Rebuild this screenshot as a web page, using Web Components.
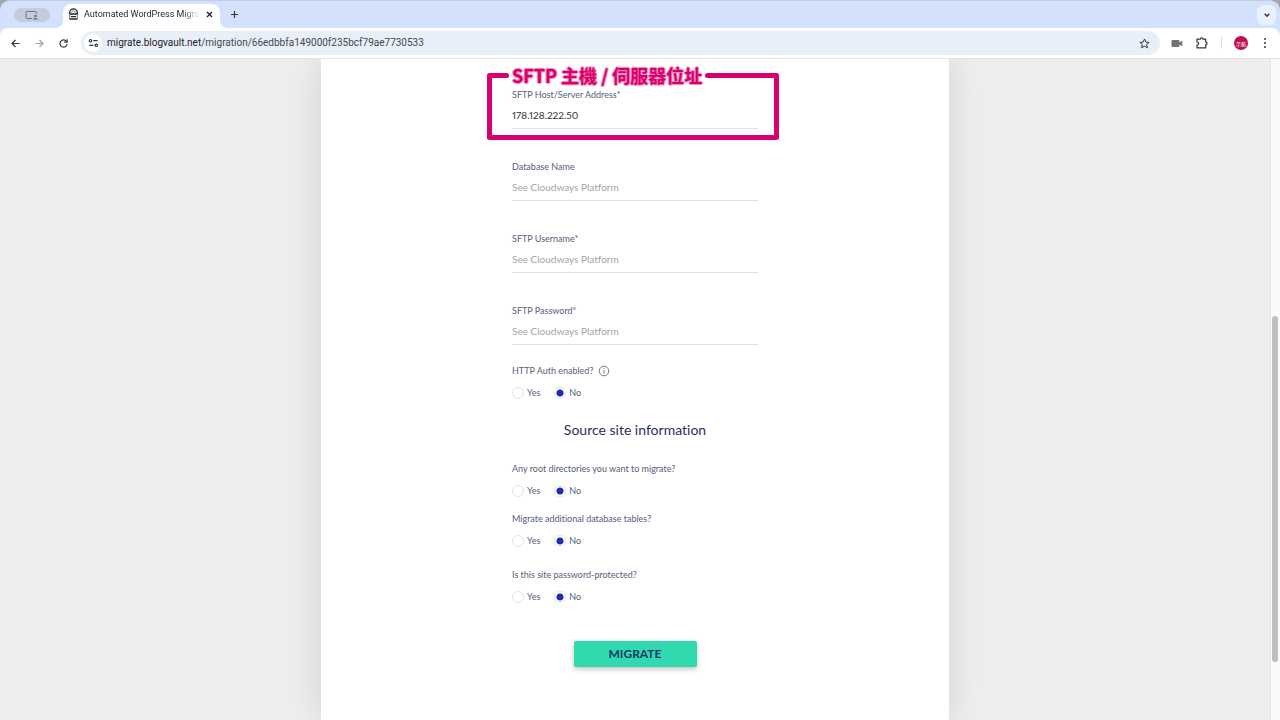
<!DOCTYPE html>
<html lang="en">
<head>
<meta charset="utf-8">
<meta name="viewport" content="width=device-width, initial-scale=1">
<title>Automated WordPress Migra</title>
<style>
  body {
    margin: 0;
    min-height: 100vh;
    display: flex;
    flex-direction: column;
    background: #eee;
    font-family: "Lato", "Liberation Sans", sans-serif;
    font-variant-ligatures: none;
    color: #566079;
  }

  page-view {
    flex: 1;
  }
</style>
</head>
<body>
<browser-bar tab-title="Automated WordPress Migra" host="migrate.blogvault.net" path="/migration/66edbbfa149000f235bcf79ae7730533"></browser-bar>
<page-view>
  <migrate-form>
    <field-callout slot="fields" text="SFTP 主機 / 伺服器位址">
      <text-field label="SFTP Host/Server Address*" value="178.128.222.50"></text-field>
    </field-callout>
    <text-field slot="fields" label="Database Name" placeholder="See Cloudways Platform"></text-field>
    <text-field slot="fields" label="SFTP Username*" placeholder="See Cloudways Platform"></text-field>
    <text-field slot="fields" label="SFTP Password*" type="password" placeholder="See Cloudways Platform"></text-field>
    <yes-no slot="auth" label="HTTP Auth enabled?" info></yes-no>
    <yes-no slot="source" label="Any root directories you want to migrate?"></yes-no>
    <yes-no slot="source" label="Migrate additional database tables?"></yes-no>
    <yes-no slot="protection" label="Is this site password-protected?"></yes-no>
  </migrate-form>
</page-view>

<script>
class BrowserBar extends HTMLElement {
  constructor() {
    super();
    this.attachShadow({ mode: 'open' });
  }

  connectedCallback() {
    this.shadowRoot.innerHTML = `
      <style>
        :host {
          display: block;
          background: #a3a6ab;
          font-family: "Roboto", "Liberation Sans", sans-serif;
          color: #34363a;
        }

        button {
          border: 0;
          padding: 0;
          background: none;
          color: inherit;
          display: flex;
          align-items: center;
          justify-content: center;
          flex: none;
        }

        svg {
          display: block;
          fill: none;
          stroke: currentColor;
          stroke-width: 1.2;
        }

        .window {
          background: #d3e1fd;
          border-radius: 10px 10px 0 0;
          border-top: 1px solid #c4cde0;
        }

        .tabs {
          display: flex;
          align-items: center;
          height: 27px;
          padding: 0 4px 0 14px;
        }

        .group {
          width: 36px;
          height: 14px;
          border-radius: 7px;
          background: #c3cbdd;
          color: #6d7586;
        }

        .tab {
          position: relative;
          display: flex;
          align-items: center;
          align-self: flex-end;
          box-sizing: border-box;
          width: 157px;
          height: 24px;
          margin-left: 13px;
          padding: 0 6px 4px 5px;
          border-radius: 8px 8px 0 0;
          background: #fff;
        }

        .tab::before,
        .tab::after {
          content: "";
          position: absolute;
          bottom: 0;
          width: 8px;
          height: 8px;
        }

        .tab::before {
          left: -8px;
          background: radial-gradient(circle at 0 0, transparent 8px, #fff 8px);
        }

        .tab::after {
          right: -8px;
          background: radial-gradient(circle at 100% 0, transparent 8px, #fff 8px);
        }

        .title {
          flex: 1;
          min-width: 0;
          margin: 0 5px;
          overflow: hidden;
          white-space: nowrap;
          font-size: 9px;
          line-height: 16px;
          color: #1f2125;
          -webkit-mask-image: linear-gradient(90deg, #000 85%, transparent);
          mask-image: linear-gradient(90deg, #000 85%, transparent);
        }

        .new {
          width: 14px;
          height: 14px;
          margin-left: 7px;
        }

        .search {
          width: 19px;
          height: 20px;
          margin-left: auto;
          border-radius: 6px;
          background: #e9f0fe;
        }

        .toolbar {
          display: flex;
          align-items: center;
          height: 30px;
          padding: 0 10px 0 8px;
          border-radius: 8px 8px 0 0;
          border-bottom: 1px solid #e6e1e2;
          background: #fff;
        }

        .nav {
          display: flex;
          gap: 10px;
          margin-right: 11px;
        }

        .nav button {
          width: 14px;
          height: 14px;
        }

        .nav .off {
          color: #a0a2a6;
        }

        .address {
          flex: 1;
          display: flex;
          align-items: center;
          height: 24px;
          padding: 0 9px 0 3px;
          border-radius: 12px;
          background: #e9eff8;
        }

        .site {
          width: 18px;
          height: 18px;
          border-radius: 9px;
          background: #fff;
        }

        .url {
          flex: 1;
          min-width: 0;
          margin-left: 5px;
          font-size: 10px;
          line-height: 16px;
          color: #45484d;
        }

        .url b {
          font-weight: 400;
          color: #1f2125;
        }

        .actions {
          display: flex;
          align-items: center;
          gap: 12px;
          margin-left: 11px;
        }

        .divider {
          width: 1px;
          height: 12px;
          background: #d3defa;
        }

        .avatar {
          width: 14px;
          height: 14px;
          border-radius: 7px;
          background: #bd0f52;
          color: #fff;
          font: 5px "Noto Sans CJK TC", sans-serif;
        }
      </style>

      <div class="window">
        <div class="tabs">
          <button class="group" aria-label="Tab groups">
            <svg width="14" height="10" viewBox="0 0 14 10"><path d="M7 8.500H2a1 1 0 0 1-1-1v-5a1 1 0 0 1 1-1h8.500a1 1 0 0 1 1 1V4" stroke-width="1"/><circle cx="10.500" cy="6" r="1.300" fill="currentColor" stroke="none"/><path d="M8 9.500c0-2 5-2 5 0z" fill="currentColor" stroke="none"/></svg>
          </button>
          <div class="tab">
            <svg width="11" height="12" viewBox="0 0 11 12"><path d="M1.700 6V4.600a3.800 3.800 0 0 1 7.600 0V6" stroke="#22282c" stroke-width="1.300"/><path d="M3.800 5V4.300a1.700 1.700 0 0 1 3.400 0V5" stroke="#65726f" stroke-width="0.800"/><path d="M1.500 5.300h8v1.400h-8zM3 8h5v1.200H3zM1.500 10.300h8v1.400h-8z" fill="#22282c" stroke="none"/><path d="M1.700 6v5M9.300 6v5" stroke="#4d7f72" stroke-width="1"/></svg>
            <span class="title"></span>
            <button aria-label="Close tab"><svg width="9" height="9" viewBox="0 0 9 9"><path d="m2 2 5 5m0-5L2 7" stroke="#1f2125" stroke-width="1.300"/></svg></button>
          </div>
          <button class="new" aria-label="New tab"><svg width="9" height="9" viewBox="0 0 9 9"><path d="M4.500 1v7M1 4.500h7"/></svg></button>
          <button class="search" aria-label="Search tabs"><svg width="8" height="8" viewBox="0 0 8 8"><path d="m1.700 2.800 2.300 2.400 2.300-2.400" stroke-width="1.500"/></svg></button>
        </div>

        <div class="toolbar">
          <div class="nav">
            <button aria-label="Back"><svg width="11" height="11" viewBox="0 0 11 11"><path d="M9.500 5.500H2M5.500 2 2 5.500 5.500 9"/></svg></button>
            <button class="off" aria-label="Forward"><svg width="11" height="11" viewBox="0 0 11 11"><path d="M1.500 5.500H9M5.500 2 9 5.500 5.500 9"/></svg></button>
            <button aria-label="Reload"><svg width="11" height="11" viewBox="0 0 11 11"><path d="M9.100 6.200A3.600 3.600 0 1 1 8.400 3.300"/><path d="M9.100 1.300v2.900H6.200"/></svg></button>
          </div>
          <div class="address">
            <button class="site" aria-label="Site information"><svg width="11" height="10" viewBox="0 0 11 10"><circle cx="2.500" cy="2.700" r="1.200"/><path d="M5.300 2.700h4.200M1.200 7.300h4.200"/><circle cx="8.300" cy="7.300" r="1.200"/></svg></button>
            <span class="url"><b></b><span class="path"></span></span>
            <button aria-label="Bookmark"><svg width="13" height="13" viewBox="0 0 13 13"><path d="m6.500 2 1.300 3.100 3.300.3-2.500 2.200.8 3.200-2.900-1.700-2.900 1.700.8-3.200-2.500-2.200 3.300-.3z" stroke-width="1"/></svg></button>
          </div>
          <div class="actions">
            <button aria-label="Camera"><svg width="12" height="9" viewBox="0 0 12 9"><path d="M1.500 1h6a1 1 0 0 1 1 1v1.500L11.300 1.500v6L8.500 5.500V7a1 1 0 0 1-1 1h-6a1 1 0 0 1-1-1V2a1 1 0 0 1 1-1z" fill="#707276" stroke="none"/></svg></button>
            <button aria-label="Extensions"><svg width="14" height="14" viewBox="0 0 14 14"><path d="M2 3.200h3.300a1.300 1.300 0 0 1 2.600 0h2.800v2.900a1.300 1.300 0 0 1 0 2.600v3.200H2V9.200a1.600 1.600 0 0 0 0-3.200z" stroke-linejoin="round"/></svg></button>
            <span class="divider"></span>
            <button class="avatar" aria-label="Profile">示範</button>
            <button aria-label="Menu"><svg width="10" height="12" viewBox="0 0 10 12"><g fill="currentColor" stroke="none"><circle cx="5" cy="2" r="1"/><circle cx="5" cy="6" r="1"/><circle cx="5" cy="10" r="1"/></g></svg></button>
          </div>
        </div>
      </div>
    `;
    this.shadowRoot.querySelector('.title').textContent = this.getAttribute('tab-title');
    this.shadowRoot.querySelector('.url b').textContent = this.getAttribute('host');
    this.shadowRoot.querySelector('.path').textContent = this.getAttribute('path');
  }
}

class PageView extends HTMLElement {
  constructor() {
    super();
    this.attachShadow({ mode: 'open' });

    this.shadowRoot.innerHTML = `
      <style>
        :host {
          display: flex;
        }

        main {
          flex: 1;
          display: flex;
          justify-content: center;
          overflow: hidden;
        }

        .scrollbar {
          width: 6px;
          padding: 0 2px 0 1px;
          border-left: 1px solid #e6e6e6;
          background: #fafafa;
          display: flex;
          flex-direction: column;
        }

        .before {
          flex: 257;
        }

        .thumb {
          flex: 345;
          border-radius: 3px;
          background: #bfbfbf;
        }

        .after {
          flex: 58;
        }
      </style>

      <main><slot></slot></main>
      <div class="scrollbar">
        <div class="before"></div>
        <div class="thumb"></div>
        <div class="after"></div>
      </div>
    `;
  }
}

class MigrateForm extends HTMLElement {
  constructor() {
    super();
    this.attachShadow({ mode: 'open' });

    this.shadowRoot.innerHTML = `
      <style>
        :host {
          display: flex;
          justify-content: center;
          box-sizing: border-box;
          width: 100%;
          max-width: 628px;
          padding: 29px 20px 52px;
          background: #fff;
          box-shadow: 0 0 36px rgba(0, 0, 0, 0.12);
        }

        form {
          width: 100%;
          max-width: 246px;
        }

        .fields {
          display: grid;
          gap: 31px;
          margin-bottom: 19px;
        }

        h2 {
          margin: 18px 0 20px;
          font-size: 14px;
          line-height: 24px;
          font-weight: 400;
          text-align: center;
          color: #2b2d5e;
        }

        .source {
          display: grid;
          gap: 14px;
          margin-bottom: 20px;
        }

        button {
          display: block;
          width: 50%;
          height: 26px;
          margin: 37px auto 0;
          padding: 0 0 2px;
          border: 0;
          border-radius: 2px;
          background: #31d9ae;
          box-shadow: 0 2px 5px rgba(0, 0, 0, 0.25);
          color: #123a6b;
          font: 700 12px "Lato", "Liberation Sans", sans-serif;
        }
      </style>

      <form>
        <div class="fields"><slot name="fields"></slot></div>
        <slot name="auth"></slot>
        <h2>Source site information</h2>
        <div class="source"><slot name="source"></slot></div>
        <slot name="protection"></slot>
        <button type="button">MIGRATE</button>
      </form>
    `;
  }
}

class TextField extends HTMLElement {
  constructor() {
    super();
    this.attachShadow({ mode: 'open' });
  }

  connectedCallback() {
    this.shadowRoot.innerHTML = `
      <style>
        :host {
          display: block;
        }

        label {
          display: block;
          font-size: 9px;
          line-height: 14px;
        }

        input {
          display: block;
          box-sizing: border-box;
          width: 100%;
          height: 27px;
          padding: 0;
          border: 0;
          border-bottom: 1px solid #e0e1e4;
          border-radius: 0;
          outline: 0;
          background: none;
          font-family: inherit;
          font-size: 10px;
          font-variant-ligatures: none;
          font-variant-numeric: proportional-nums;
          color: #333;
        }

        input::placeholder {
          color: #a3a3a3;
          opacity: 1;
        }
      </style>

      <label for="input"></label>
      <input id="input">
    `;
    const input = this.shadowRoot.querySelector('input');
    this.shadowRoot.querySelector('label').textContent = this.getAttribute('label');
    input.type = this.getAttribute('type') || 'text';
    input.placeholder = this.getAttribute('placeholder') || '';
    input.value = this.getAttribute('value') || '';
  }
}

class FieldCallout extends HTMLElement {
  constructor() {
    super();
    this.attachShadow({ mode: 'open' });
  }

  connectedCallback() {
    this.shadowRoot.innerHTML = `
      <style>
        :host {
          display: block;
          position: relative;
        }

        /* frame lies over the field and sticks out on every side */
        .frame {
          position: absolute;
          inset: -13px -21px -11px -25px;
          box-sizing: border-box;
          border: 5px solid #d9006c;
          border-top: 0;
          border-radius: 3px;
          pointer-events: none;
        }

        .head {
          position: absolute;
          top: -10px;
          left: -5px;
          right: -5px;
          display: flex;
          align-items: center;
          gap: 3px;
          height: 20px;
        }

        .line {
          width: 22px;
          height: 5px;
          border-radius: 3px;
          background: #d9006c;
        }

        .line:last-child {
          flex: 1;
        }

        .text {
          font: 700 18px/20px "Noto Sans CJK TC", sans-serif;
          white-space: nowrap;
          color: #d9006c;
          -webkit-text-stroke: 2px #fff;
          paint-order: stroke fill;
          text-shadow: 1px 0 1px #e884b5, -1px 0 1px #e884b5, 0 1px 1px #e884b5, 0 -1px 1px #e884b5;
        }
      </style>

      <slot></slot>
      <div class="frame">
        <div class="head">
          <span class="line"></span>
          <span class="text"></span>
          <span class="line"></span>
        </div>
      </div>
    `;
    this.shadowRoot.querySelector('.text').textContent = this.getAttribute('text');
  }
}

class YesNo extends HTMLElement {
  constructor() {
    super();
    this.attachShadow({ mode: 'open' });
  }

  connectedCallback() {
    const info = this.hasAttribute('info')
      ? '<svg width="12" height="12" viewBox="0 0 12 12" role="img" aria-label="Info"><circle cx="6" cy="6" r="4.800"/><path d="M6 5.200v3.500M6 3.200v1"/></svg>'
      : '';

    this.shadowRoot.innerHTML = `
      <style>
        :host {
          display: block;
          font-size: 9px;
          line-height: 14px;
        }

        .question {
          display: flex;
          align-items: center;
          gap: 5px;
          height: 14px;
          margin-bottom: 8px;
        }

        svg {
          fill: none;
          stroke: #666b75;
          stroke-width: 0.9;
        }

        .options {
          display: flex;
          gap: 14px;
        }

        label {
          display: flex;
          align-items: center;
          gap: 3px;
        }

        input {
          appearance: none;
          box-sizing: border-box;
          width: 12px;
          height: 12px;
          margin: 0;
          border: 1px solid #e3e4ea;
          border-radius: 50%;
          background: #fff;
        }

        input:checked {
          background: radial-gradient(circle, #1f2bab 3px, #fff 4px);
        }
      </style>

      <div role="radiogroup" aria-labelledby="question">
        <div class="question"><span id="question"></span>${info}</div>
        <div class="options">
          <label><input type="radio" name="answer" value="yes">Yes</label>
          <label><input type="radio" name="answer" value="no" checked>No</label>
        </div>
      </div>
    `;
    this.shadowRoot.querySelector('#question').textContent = this.getAttribute('label');
  }
}

customElements.define('browser-bar', BrowserBar);
customElements.define('page-view', PageView);
customElements.define('migrate-form', MigrateForm);
customElements.define('text-field', TextField);
customElements.define('field-callout', FieldCallout);
customElements.define('yes-no', YesNo);
</script>
</body>
</html>
